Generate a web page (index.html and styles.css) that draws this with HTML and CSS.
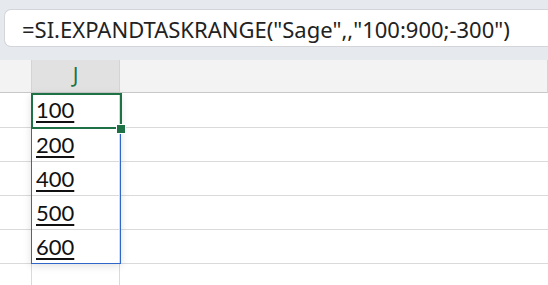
FILE: index.html
```html
<!DOCTYPE html>
<html lang="en">
<head>
    <meta charset="UTF-8">
    <title>Sheet - Expand task range</title>
    <link rel="stylesheet" href="styles.css">
</head>
<body>
    <div class="formula-bar">
        <div class="formula-input">=SI.EXPANDTASKRANGE("Sage",,"100:900;-300")</div>
    </div>
    <div class="sheet">
        <div class="row header-row">
            <div class="cell col-i"></div>
            <div class="cell col-j">J</div>
            <div class="cell col-k"></div>
        </div>
        <div class="row first-row">
            <div class="cell col-i"></div>
            <div class="cell col-j"><span class="value">100</span></div>
            <div class="cell col-k"></div>
        </div>
        <div class="row">
            <div class="cell col-i"></div>
            <div class="cell col-j"><span class="value">200</span></div>
            <div class="cell col-k"></div>
        </div>
        <div class="row">
            <div class="cell col-i"></div>
            <div class="cell col-j"><span class="value">400</span></div>
            <div class="cell col-k"></div>
        </div>
        <div class="row">
            <div class="cell col-i"></div>
            <div class="cell col-j"><span class="value">500</span></div>
            <div class="cell col-k"></div>
        </div>
        <div class="row">
            <div class="cell col-i"></div>
            <div class="cell col-j"><span class="value">600</span></div>
            <div class="cell col-k"></div>
        </div>
        <div class="row">
            <div class="cell col-i"></div>
            <div class="cell col-j"></div>
            <div class="cell col-k"></div>
        </div>

        <!-- spilled range + active cell drawn on top of the grid -->
        <div class="spill-range"></div>
        <div class="active-cell"></div>
        <div class="fill-handle"></div>
    </div>
</body>
</html>
```

FILE: styles.css
```css
body {
    margin: 0;
    width: 548px;
    height: 285px;
    overflow: hidden;
    background-color: #fff;
    font-family: 'Noto Sans', 'Open Sans', sans-serif;
}
.formula-bar {
    height: 60px;
    background-color: #e6e9ed;
    padding: 9px 0 0 4px;
    box-sizing: border-box;
}
.formula-input {
    height: 38px;
    box-sizing: border-box;
    background-color: #fff;
    border: 1px solid #d3d5d9;
    border-right: none;
    border-radius: 7px 0 0 7px;
    padding-left: 17px;
    font-size: 22px;
    line-height: 38px;
    color: #222;
    white-space: nowrap;
}
.sheet {
    position: relative;
}
.row {
    display: flex;
    height: 34px;
}
.first-row {
    height: 35px;
}
.cell {
    box-sizing: border-box;
    border-bottom: 1px solid #dadada;
    border-right: 1px solid #dadada;
}
.col-i {
    width: 32px;
}
.col-j {
    width: 88px;
    padding-left: 4px;
}
.col-k {
    flex: 1;
    border-right: none;
}
.header-row {
    height: 33px;
    background-color: #f3f3f3;
}
.header-row .cell {
    border-bottom: 1px solid #c8c8c8;
    border-right: 1px solid #d4d4d4;
}
.header-row .col-j {
    background-color: #e1e1e1;
    color: #217346;
    font-family: 'Noto Sans', sans-serif;
    font-size: 21px;
    line-height: 30px;
    text-align: center;
    padding-left: 0;
}
.value {
    font-family: Lato, 'Liberation Sans', sans-serif;
    font-size: 22px;
    line-height: 33px;
    color: #111;
    text-decoration: underline;
    text-decoration-thickness: 2px;
    text-underline-offset: 3px;
}
.spill-range {
    position: absolute;
    left: 31px;
    top: 33px;
    width: 90px;
    height: 171px;
    box-sizing: border-box;
    border: 1px solid #2f66c8;
    box-shadow: 0 2px 8px rgba(0, 0, 0, 0.12);
}
.active-cell {
    position: absolute;
    left: 31px;
    top: 33px;
    width: 91px;
    height: 36px;
    box-sizing: border-box;
    border: 2px solid #1e7145;
}
.fill-handle {
    position: absolute;
    left: 116px;
    top: 64px;
    width: 8px;
    height: 8px;
    background-color: #1e7145;
    border: 1px solid #fff;
}
```
